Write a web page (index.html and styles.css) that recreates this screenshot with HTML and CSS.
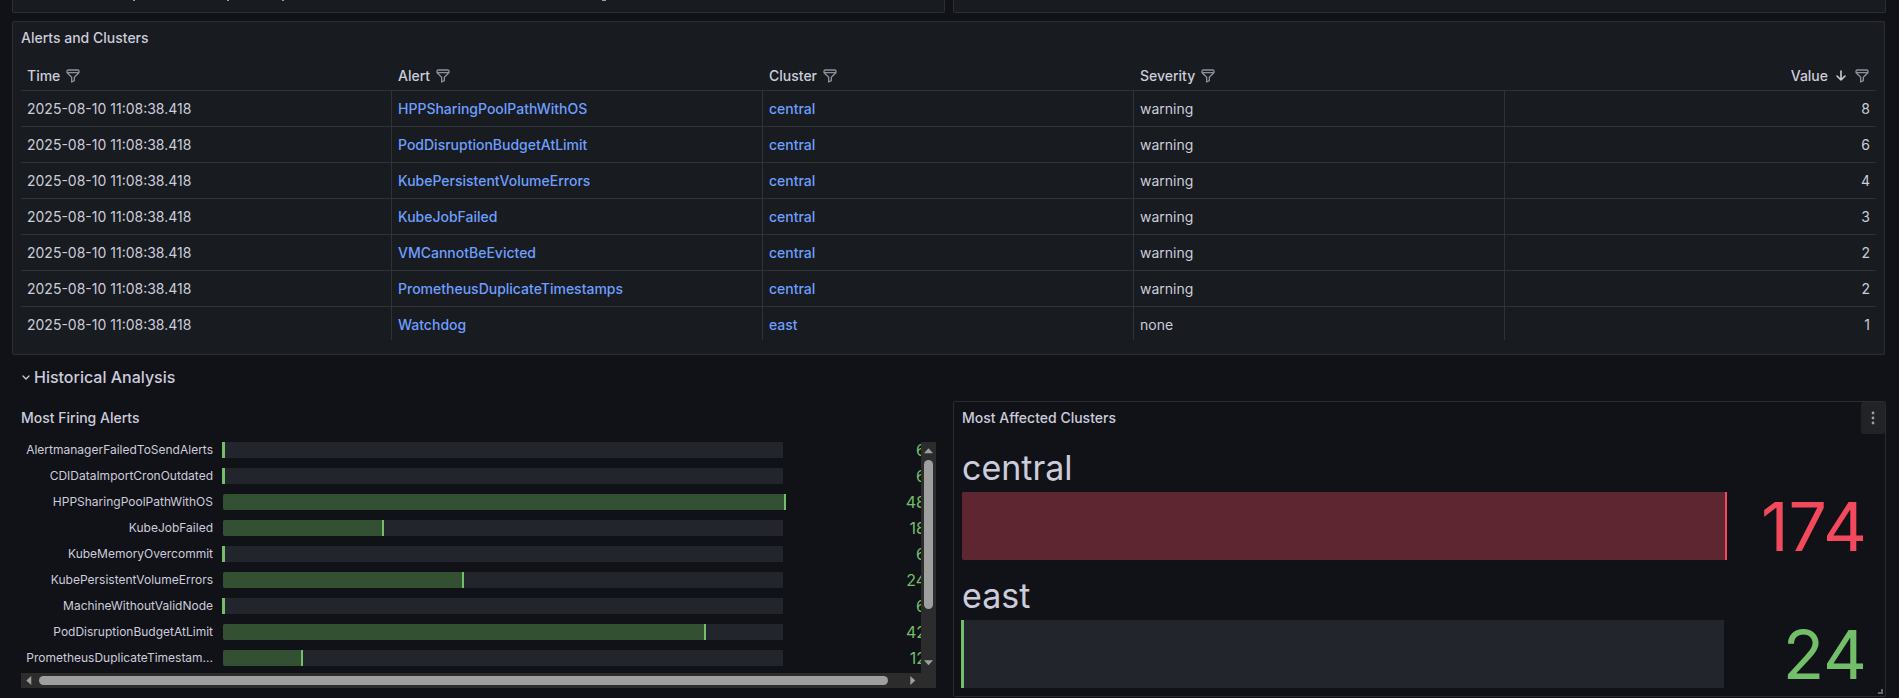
FILE: index.html
```html
<!DOCTYPE html>
<html lang="en">
<head>
<meta charset="utf-8">
<title>Alerts and Clusters</title>
<link rel="stylesheet" href="styles.css">
</head>
<body>
<svg class="defs" aria-hidden="true">
  <symbol id="filter" viewBox="0 0 24 24"><path d="M19 2H5a3 3 0 0 0-3 3v1.17a3 3 0 0 0 .25 1.2v.06a2.810 2.810 0 0 0 .59.860L9 14.410V21a1 1 0 0 0 .47.850A1 1 0 0 0 10 22a1 1 0 0 0 .450-.110l4-2A1 1 0 0 0 15 19v-4.590l6.120-6.120a2.810 2.810 0 0 0 .590-.860v-.060A3 3 0 0 0 22 6.170V5a3 3 0 0 0-3-3Zm-5.710 11.290A1 1 0 0 0 13 14v4.380l-2 1V14a1 1 0 0 0-.290-.710L5.410 8h13.180ZM20 6H4V5a1 1 0 0 1 1-1h14a1 1 0 0 1 1 1Z"/></symbol>
</svg>
<main class="dashboard">
  <div class="columns">
    <section class="panel panel-cut"><svg class="descenders" viewBox="0 0 600 1" aria-hidden="true"><path d="M120 0h2v1h-2zM214 0h2v1h-2zM269 0h2v1h-2zM589 0h4v1h-4z"/></svg></section>
    <section class="panel panel-cut"></section>
  </div>

  <section class="panel table-panel">
    <h2 class="panel-title">Alerts and Clusters</h2>
    <table class="alerts">
      <thead>
        <tr>
          <th><div class="head"><span>Time</span><button class="filter" aria-label="Filter Time"><svg><use href="#filter"/></svg></button></div></th>
          <th><div class="head"><span>Alert</span><button class="filter" aria-label="Filter Alert"><svg><use href="#filter"/></svg></button></div></th>
          <th><div class="head"><span>Cluster</span><button class="filter" aria-label="Filter Cluster"><svg><use href="#filter"/></svg></button></div></th>
          <th><div class="head"><span>Severity</span><button class="filter" aria-label="Filter Severity"><svg><use href="#filter"/></svg></button></div></th>
          <th><div class="head head-right"><span>Value</span><svg class="sort" viewBox="0 0 16 16"><path d="M8 3v9M4 8l4 4 4-4"/></svg><button class="filter" aria-label="Filter Value"><svg><use href="#filter"/></svg></button></div></th>
        </tr>
      </thead>
      <tbody>
        <tr><td>2025-08-10 11:08:38.418</td><td><a href="#">HPPSharingPoolPathWithOS</a></td><td><a href="#">central</a></td><td>warning</td><td>8</td></tr>
        <tr><td>2025-08-10 11:08:38.418</td><td><a href="#">PodDisruptionBudgetAtLimit</a></td><td><a href="#">central</a></td><td>warning</td><td>6</td></tr>
        <tr><td>2025-08-10 11:08:38.418</td><td><a href="#">KubePersistentVolumeErrors</a></td><td><a href="#">central</a></td><td>warning</td><td>4</td></tr>
        <tr><td>2025-08-10 11:08:38.418</td><td><a href="#">KubeJobFailed</a></td><td><a href="#">central</a></td><td>warning</td><td>3</td></tr>
        <tr><td>2025-08-10 11:08:38.418</td><td><a href="#">VMCannotBeEvicted</a></td><td><a href="#">central</a></td><td>warning</td><td>2</td></tr>
        <tr><td>2025-08-10 11:08:38.418</td><td><a href="#">PrometheusDuplicateTimestamps</a></td><td><a href="#">central</a></td><td>warning</td><td>2</td></tr>
        <tr><td>2025-08-10 11:08:38.418</td><td><a href="#">Watchdog</a></td><td><a href="#">east</a></td><td>none</td><td>1</td></tr>
      </tbody>
    </table>
  </section>

  <button class="row-toggle"><svg viewBox="0 0 10 10"><path d="M2 4l3 3 3-3"/></svg><span>Historical Analysis</span></button>

  <div class="columns">
    <section class="panel panel-clear">
      <h2 class="panel-title">Most Firing Alerts</h2>
      <div class="scroller">
        <div class="viewport">
          <div class="gauges">
            <div class="gauge"><span class="name">AlertmanagerFailedToSendAlerts</span><div class="bar"><div class="fill empty"></div></div><span class="value">6</span></div>
            <div class="gauge"><span class="name">CDIDataImportCronOutdated</span><div class="bar"><div class="fill empty"></div></div><span class="value">6</span></div>
            <div class="gauge"><span class="name">HPPSharingPoolPathWithOS</span><div class="bar"><div class="fill" style="width:100%"></div></div><span class="value">48</span></div>
            <div class="gauge"><span class="name">KubeJobFailed</span><div class="bar"><div class="fill" style="width:28.57%"></div></div><span class="value">18</span></div>
            <div class="gauge"><span class="name">KubeMemoryOvercommit</span><div class="bar"><div class="fill empty"></div></div><span class="value">6</span></div>
            <div class="gauge"><span class="name">KubePersistentVolumeErrors</span><div class="bar"><div class="fill" style="width:42.86%"></div></div><span class="value">24</span></div>
            <div class="gauge"><span class="name">MachineWithoutValidNode</span><div class="bar"><div class="fill empty"></div></div><span class="value">6</span></div>
            <div class="gauge"><span class="name">PodDisruptionBudgetAtLimit</span><div class="bar"><div class="fill" style="width:85.71%"></div></div><span class="value">42</span></div>
            <div class="gauge"><span class="name">PrometheusDuplicateTimestam...</span><div class="bar"><div class="fill" style="width:14.29%"></div></div><span class="value">12</span></div>
          </div>
        </div>
        <div class="vbar"><svg viewBox="0 0 10 6"><path d="M0 5.500L5 0l5 5.500z"/></svg><div class="vtrack"><div class="thumb"></div></div><svg viewBox="0 0 10 6"><path d="M0 0h10L5 5.500z"/></svg></div>
        <div class="hbar"><svg viewBox="0 0 6 10"><path d="M5.500 0v10L0 5z"/></svg><div class="htrack"><div class="thumb"></div></div><svg viewBox="0 0 6 10"><path d="M0 0l5.500 5L0 10z"/></svg></div>
        <div class="corner"></div>
      </div>
    </section>

    <section class="panel panel-clear panel-hover">
      <h2 class="panel-title">Most Affected Clusters</h2>
      <button class="menu" aria-label="Menu"><svg viewBox="0 0 4 14"><circle cx="2" cy="2" r="1.400"/><circle cx="2" cy="7" r="1.400"/><circle cx="2" cy="12" r="1.400"/></svg></button>
      <div class="big-gauges">
        <div class="big-gauge"><span class="big-name">central</span><div class="big-row"><div class="bar"><div class="fill red" style="width:100%"></div></div><span class="big-value red">174</span></div></div>
        <div class="big-gauge"><span class="big-name">east</span><div class="big-row"><div class="bar"><div class="fill empty"></div></div><span class="big-value">24</span></div></div>
      </div>
      <svg class="resize" viewBox="0 0 5 5"><path d="M4 0v4H0"/></svg>
    </section>
  </div>
</main>
</body>
</html>
```
FILE: styles.css
```css
* { box-sizing: border-box; }
body {
  margin: 0;
  background: #111217;
  color: #ccccdc;
  font: 14px/22px Inter, "Liberation Sans", sans-serif;
  overflow: hidden;
}
button { border: 0; padding: 0; margin: 0; background: none; color: inherit; font: inherit; }
a { color: #6e9fff; font-weight: 500; text-decoration: none; }
.defs { position: absolute; width: 0; height: 0; }
.dashboard { padding: 0 13px 0 12px; }
.columns { display: grid; grid-template-columns: 1fr 1fr; gap: 8px; }
.panel {
  position: relative;
  min-width: 0;
  background: #181b1f;
  border: 1px solid #2d2e34;
  border-radius: 2px;
}
.panel-cut { height: 13px; border-top: 0; border-radius: 0 0 2px 2px; }
.descenders { display: block; width: 600px; height: 1px; fill: #9a9ba8; }
.panel-clear { background: none; border-color: transparent; height: 296px; padding: 0 8px; }
.panel-hover { border-color: #2a2b30; }
.panel-title { margin: 0; height: 32px; line-height: 32px; font-size: 14px; font-weight: 500; }

.table-panel { margin: 8px 1px 0 0; height: 334px; padding: 0 8px; }
.alerts { width: 100%; table-layout: fixed; border-collapse: separate; border-spacing: 0; }
.alerts th { height: 37px; padding: 8px 6px 0; border-bottom: 1px solid #2f3237; font-weight: 500; text-align: left; }
.alerts td { height: 36px; padding: 0 6px; border-bottom: 1px solid #2f3237; border-right: 1px solid #2f3237; }
.alerts td:last-child { border-right: 0; text-align: right; }
.alerts tbody tr:last-child td { height: 33px; border-bottom: 0; padding-top: 2px; }
.head { display: flex; align-items: center; gap: 5px; }
.head-right { justify-content: flex-end; gap: 5px; }
.filter { display: flex; }
.filter svg { width: 16px; height: 16px; fill: #8e8f9b; }
.sort { width: 16px; height: 16px; fill: none; stroke: #ccccdc; stroke-width: 1.600; stroke-linecap: round; stroke-linejoin: round; }

.row-toggle { display: flex; align-items: center; gap: 3px; height: 46px; padding: 0 0 2px 9px; font-size: 16px; font-weight: 500; }
.row-toggle svg { width: 10px; height: 10px; fill: none; stroke: #ccccdc; stroke-width: 1.300; stroke-linecap: round; }

.scroller { margin-top: 8px; display: grid; grid-template: 231px 15px / 1fr 15px; }
.viewport { overflow: hidden; }
.gauges { width: calc(100% + 15px); display: grid; gap: 10px; }
.gauge { display: grid; grid-template-columns: 192px 1fr 130px; column-gap: 10px; padding-right: 10px; height: 16px; line-height: 16px; }
.name { font-size: 12px; text-align: right; white-space: nowrap; }
.value { font-size: 16px; text-align: right; color: #73bf69; }
.bar { display: grid; background: linear-gradient(#22252b, #22252b) 0 0 / calc(100% - 3px) 100% no-repeat; border-radius: 2px; }
.fill { background: #335033; border-right: 2px solid #73bf69; border-radius: 2px 0 0 2px; }
.fill.red { background: #5d2630; border-color: #f2495c; }
.fill.empty { width: 3px; margin-left: -1px; border-right-width: 3px; border-radius: 0; }
.vbar, .hbar, .corner { background: #2c2c2c; }
.vbar { display: flex; flex-direction: column; align-items: center; padding: 6px 0 7px; gap: 6px; }
.vbar svg { width: 9px; height: 6px; fill: #9f9f9f; }
.vtrack { flex: 1; width: 9px; }
.vtrack .thumb { height: 77%; }
.hbar { display: flex; align-items: center; padding: 0 5px; gap: 7px; }
.hbar svg { width: 6px; height: 9px; fill: #9f9f9f; }
.htrack { flex: 1; height: 9px; }
.htrack .thumb { width: 98.300%; height: 9px; }
.thumb { background: #9f9f9f; border-radius: 5px; }

.menu { position: absolute; top: 0; right: 0; width: 24px; height: 32px; display: grid; place-items: center; background: #222327; border-radius: 2px; }
.menu svg { width: 4px; height: 14px; fill: #9d9eab; }
.big-gauges { display: grid; gap: 10px; padding-top: 8px; }
.big-gauge { display: grid; grid-template-rows: 50px 68px; }
.big-name { font-size: 34px; line-height: 52px; }
.big-row { display: grid; grid-template-columns: 1fr 140px; padding-right: 10px; }
.big-value { font-size: 68px; line-height: 68px; text-align: right; color: #73bf69; }
.big-value.red { color: #f2495c; }
.resize { position: absolute; right: 2px; bottom: 2px; width: 5px; height: 5px; fill: none; stroke: #66676c; stroke-width: 2; }
```
